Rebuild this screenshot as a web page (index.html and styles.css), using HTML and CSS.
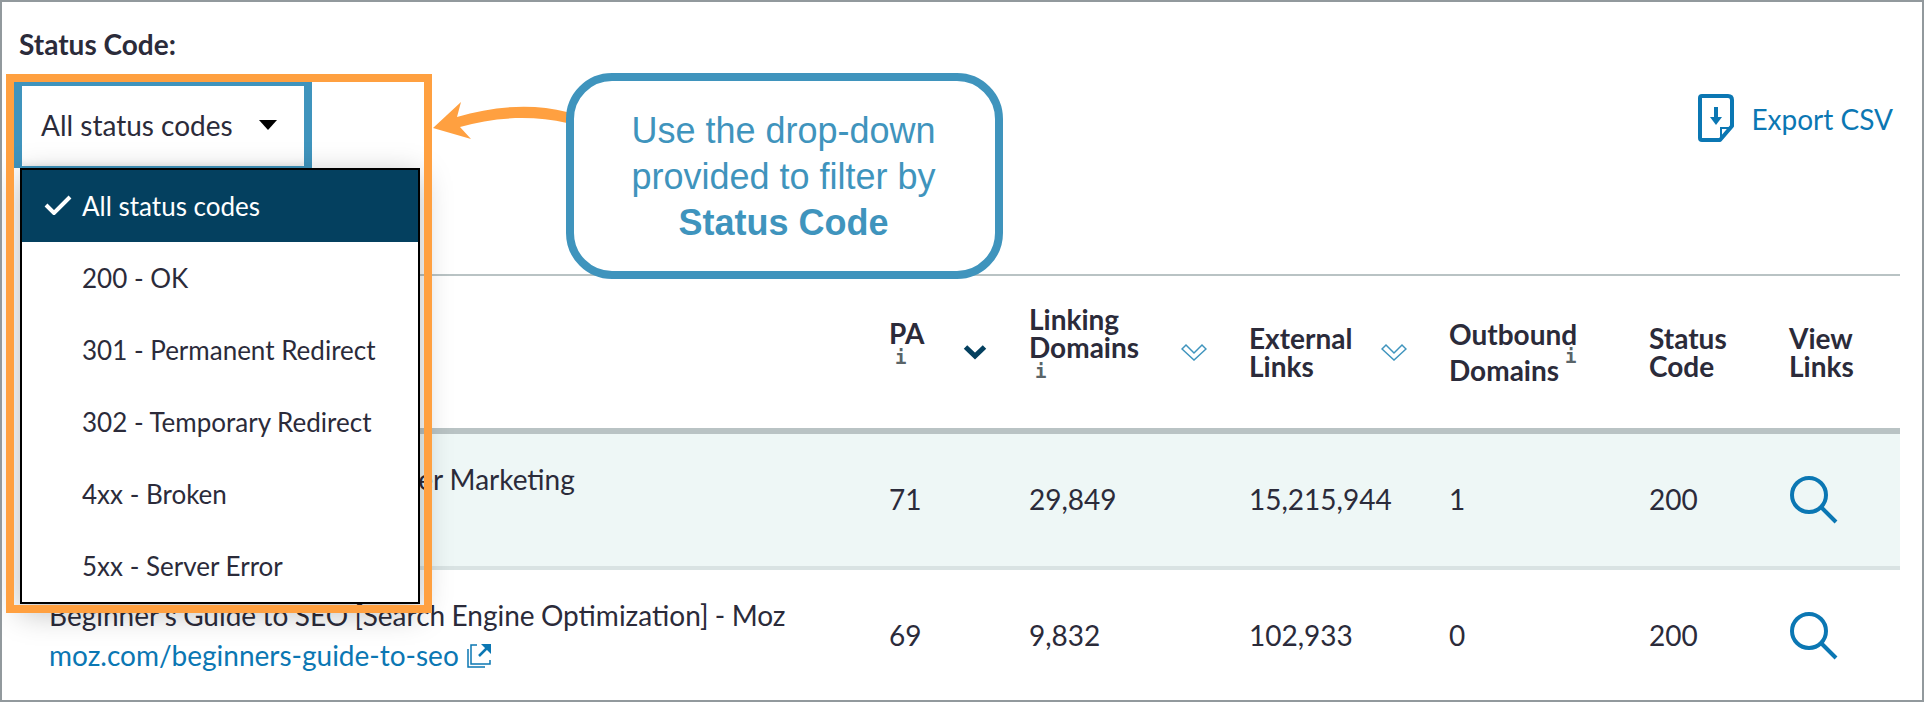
FILE: index.html
```html
<!DOCTYPE html>
<html lang="en">
<head>
  <meta charset="UTF-8" />
  <title>Top Pages</title>
  <link rel="stylesheet" href="styles.css">
</head>
<body>
  <div class="frame">
    <div class="filters">
      <div class="filter-label">Status Code:</div>
      <div class="filter-row">
        <div class="select-wrap">
          <div class="select-btn">
            <span>All status codes</span>
            <span class="caret"></span>
          </div>
          <ul class="menu">
            <li class="menu-item selected">
              <svg class="check" viewBox="0 0 28 20" width="28" height="20"><path d="M2 10 L10 18 L26 2" fill="none" stroke="#fff" stroke-width="4"/></svg>
              All status codes
            </li>
            <li class="menu-item">200 - OK</li>
            <li class="menu-item">301 - Permanent Redirect</li>
            <li class="menu-item">302 - Temporary Redirect</li>
            <li class="menu-item">4xx - Broken</li>
            <li class="menu-item">5xx - Server Error</li>
          </ul>
        </div>
        <a class="export" href="#">
          <svg viewBox="0 0 36 48" width="36" height="48">
            <path d="M4 2 H30 Q34 2 34 6 V32 L22 46 H4 Q2 46 2 44 V4 Q2 2 4 2 Z" fill="none" stroke="#0b77b3" stroke-width="4" stroke-linejoin="round"/>
            <path d="M23 45 V34 H33" fill="none" stroke="#0b77b3" stroke-width="2"/>
            <path d="M18 13 V26" stroke="#0b77b3" stroke-width="4"/>
            <path d="M12 23 H24 L18 31 Z" fill="#0b77b3"/>
          </svg>
          <span>Export CSV</span>
        </a>
      </div>
    </div>

    <table class="pages">
      <colgroup>
        <col class="col-title"><col class="col-pa"><col class="col-ld"><col class="col-el"><col class="col-od"><col class="col-sc"><col class="col-vl">
      </colgroup>
      <thead>
        <tr>
          <th></th>
          <th>
            <div class="sortable">
              <div>PA<span class="info">i</span></div>
              <svg viewBox="0 0 24 16" width="24" height="16"><path d="M2.5 3 L12 12 L21.5 3" fill="none" stroke="#04405f" stroke-width="5"/></svg>
            </div>
          </th>
          <th>
            <div class="sortable">
              <div>Linking<br>Domains<span class="info">i</span></div>
              <svg viewBox="0 0 26 18" width="26" height="18"><path d="M1 6 L5 2 L13 10 L21 2 L25 6 L13 17 Z" fill="none" stroke="#3f94bd" stroke-width="1.5"/></svg>
            </div>
          </th>
          <th>
            <div class="sortable">
              <div>External<br>Links</div>
              <svg viewBox="0 0 26 18" width="26" height="18"><path d="M1 6 L5 2 L13 10 L21 2 L25 6 L13 17 Z" fill="none" stroke="#3f94bd" stroke-width="1.5"/></svg>
            </div>
          </th>
          <th><div class="outbound"><div>Outbound</div><div>Domains<span class="info info-sup">i</span></div></div></th>
          <th>Status<br>Code</th>
          <th>View<br>Links</th>
        </tr>
      </thead>
      <tbody>
        <tr class="row-active">
          <td class="title-cell">
            <div class="page-title">Moz - SEO Software for Smarter Marketing</div>
            <a class="page-link" href="#">moz.com</a>
          </td>
          <td>71</td>
          <td>29,849</td>
          <td>15,215,944</td>
          <td>1</td>
          <td>200</td>
          <td>
            <svg class="search" viewBox="0 0 48 48" width="48" height="48"><circle cx="19" cy="19" r="17" fill="none" stroke="#0b77b3" stroke-width="4"/><path d="M32 32 L46 46" stroke="#0b77b3" stroke-width="4"/></svg>
          </td>
        </tr>
        <tr>
          <td class="title-cell">
            <div class="page-title">Beginner's Guide to SEO [Search Engine Optimization] - Moz</div>
            <a class="page-link" href="#">moz.com/beginners-guide-to-seo<svg viewBox="0 0 24 24" width="24" height="24"><path d="M1 5 V23 H18" fill="none" stroke="#0b77b3" stroke-width="1.5"/><path d="M10 1 H4 V20 H23 V16" fill="none" stroke="#0b77b3" stroke-width="1.5"/><path d="M12 12 L20 4" stroke="#0b77b3" stroke-width="2.5"/><path d="M14 0 H24 V10 Z" fill="#0b77b3"/></svg></a>
          </td>
          <td>69</td>
          <td>9,832</td>
          <td>102,933</td>
          <td>0</td>
          <td>200</td>
          <td>
            <svg class="search" viewBox="0 0 48 48" width="48" height="48"><circle cx="19" cy="19" r="17" fill="none" stroke="#0b77b3" stroke-width="4"/><path d="M32 32 L46 46" stroke="#0b77b3" stroke-width="4"/></svg>
          </td>
        </tr>
      </tbody>
    </table>

    <!-- annotation layer -->
    <div class="highlight"></div>
    <svg class="arrow" viewBox="0 0 140 44" width="140" height="44">
      <path d="M0 27 L28 1 L24 16 C60 5 100 2 134 11 L134 22 C100 14 60 16 27 26 L38 38 Z" fill="#ffa040"/>
    </svg>
    <div class="callout">
      Use the drop-down<br>provided to filter by<br><b>Status Code</b>
    </div>
  </div>
</body>
</html>
```

FILE: styles.css
```css
* {
  box-sizing: border-box;
}

html, body {
  margin: 0;
  height: 702px;
  overflow: hidden;
  background: #fff;
}

body {
  font-family: Lato, "Open Sans", sans-serif;
  font-size: 28px;
  color: #2b2b3a;
}

.frame {
  position: relative;
  width: 1924px;
  height: 702px;
  border: 2px solid #92999d;
  overflow: hidden;
}

.filters {
  height: 272px;
  padding: 28px 29px 0 12px;
}

.filter-label {
  margin: 0 0 24px 5px;
  font-weight: 700;
  line-height: 28px;
}

.filter-row {
  display: flex;
  justify-content: space-between;
  align-items: flex-start;
}

.select-wrap {
  position: relative;
  width: 298px;
  height: 86px;
  border: solid #3f94bd;
  border-width: 4px 8px 2px;
}

.select-btn {
  display: flex;
  align-items: center;
  justify-content: space-between;
  height: 80px;
  padding: 0 27px 2px 19px;
  background: #fff;
  border-radius: 3px;
  box-shadow: inset 0 -8px 8px -8px rgba(0, 0, 0, 0.12);
}

.caret {
  width: 0;
  height: 0;
  border-left: 9px solid transparent;
  border-right: 9px solid transparent;
  border-top: 10px solid #000;
}

.menu {
  position: absolute;
  left: -2px;
  top: 82px;
  z-index: 2;
  width: 400px;
  margin: 0;
  padding: 0;
  list-style: none;
  background: #fff;
  border: 2px solid #000;
  box-shadow: 0 8px 30px rgba(0, 0, 0, 0.28);
}

.menu-item {
  position: relative;
  height: 72px;
  padding-left: 60px;
  font-size: 26px;
  line-height: 72px;
}

.menu-item.selected {
  background: #04405f;
  color: #fff;
}

.check {
  position: absolute;
  left: 22px;
  top: 25px;
}

.export {
  display: flex;
  align-items: center;
  gap: 17px;
  margin-top: 12px;
  color: #0b77b3;
  text-decoration: none;
}

.export span {
  margin-top: 2px;
}

.pages {
  width: 1880px;
  margin-left: 18px;
  table-layout: fixed;
  border-collapse: separate;
  border-spacing: 0;
}

.col-title { width: 860px; }
.col-pa { width: 140px; }
.col-ld { width: 220px; }
.col-el { width: 200px; }
.col-od { width: 200px; }
.col-sc { width: 140px; }
.col-vl { width: 120px; }

th {
  height: 160px;
  padding: 0 0 1px 9px;
  border-top: 2px solid #b9c3c4;
  border-bottom: 6px solid #b9c3c4;
  font-weight: 700;
  line-height: 28px;
  text-align: left;
}

.sortable {
  display: flex;
  align-items: center;
  justify-content: space-between;
  padding-right: 33px;
}

.info {
  display: block;
  margin: 2px 0 20px 6px;
  font-family: "DejaVu Sans Mono", monospace;
  font-size: 19px;
  font-weight: 700;
  line-height: 16px;
  color: #5a6468;
}

.outbound {
  display: flex;
  flex-direction: column;
  gap: 4px;
}

.info-sup {
  display: inline-block;
  position: relative;
  top: -4px;
  margin: 0 0 0 6px;
  vertical-align: 14px;
}

td {
  height: 136px;
  padding: 0 0 2px 9px;
  border-bottom: 4px solid #d9e3e3;
}

.row-active td {
  background: #eef7f6;
}

.title-cell {
  padding-left: 29px;
  line-height: 40px;
}

.page-title {
  word-spacing: -0.8px;
}

.row-active .page-title {
  word-spacing: -0.2px;
}

.page-link {
  color: #0b77b3;
  text-decoration: none;
}

.page-link svg {
  margin-left: 8px;
  vertical-align: -2px;
}

.search {
  display: block;
  margin: 2px 0 0 1px;
}

.highlight {
  position: absolute;
  left: 4px;
  top: 72px;
  z-index: 3;
  width: 426px;
  height: 539px;
  border: 8px solid #ffa040;
}

.arrow {
  position: absolute;
  left: 431px;
  top: 99px;
  z-index: 3;
}

.callout {
  position: absolute;
  left: 564px;
  top: 71px;
  z-index: 4;
  width: 437px;
  height: 206px;
  padding: 27px 2px 0 0;
  background: #fff;
  border: 8px solid #3f94bd;
  border-radius: 46px;
  color: #3f94bd;
  font-family: "Liberation Sans", Arial, sans-serif;
  font-size: 36px;
  line-height: 46px;
  text-align: center;
}
```
